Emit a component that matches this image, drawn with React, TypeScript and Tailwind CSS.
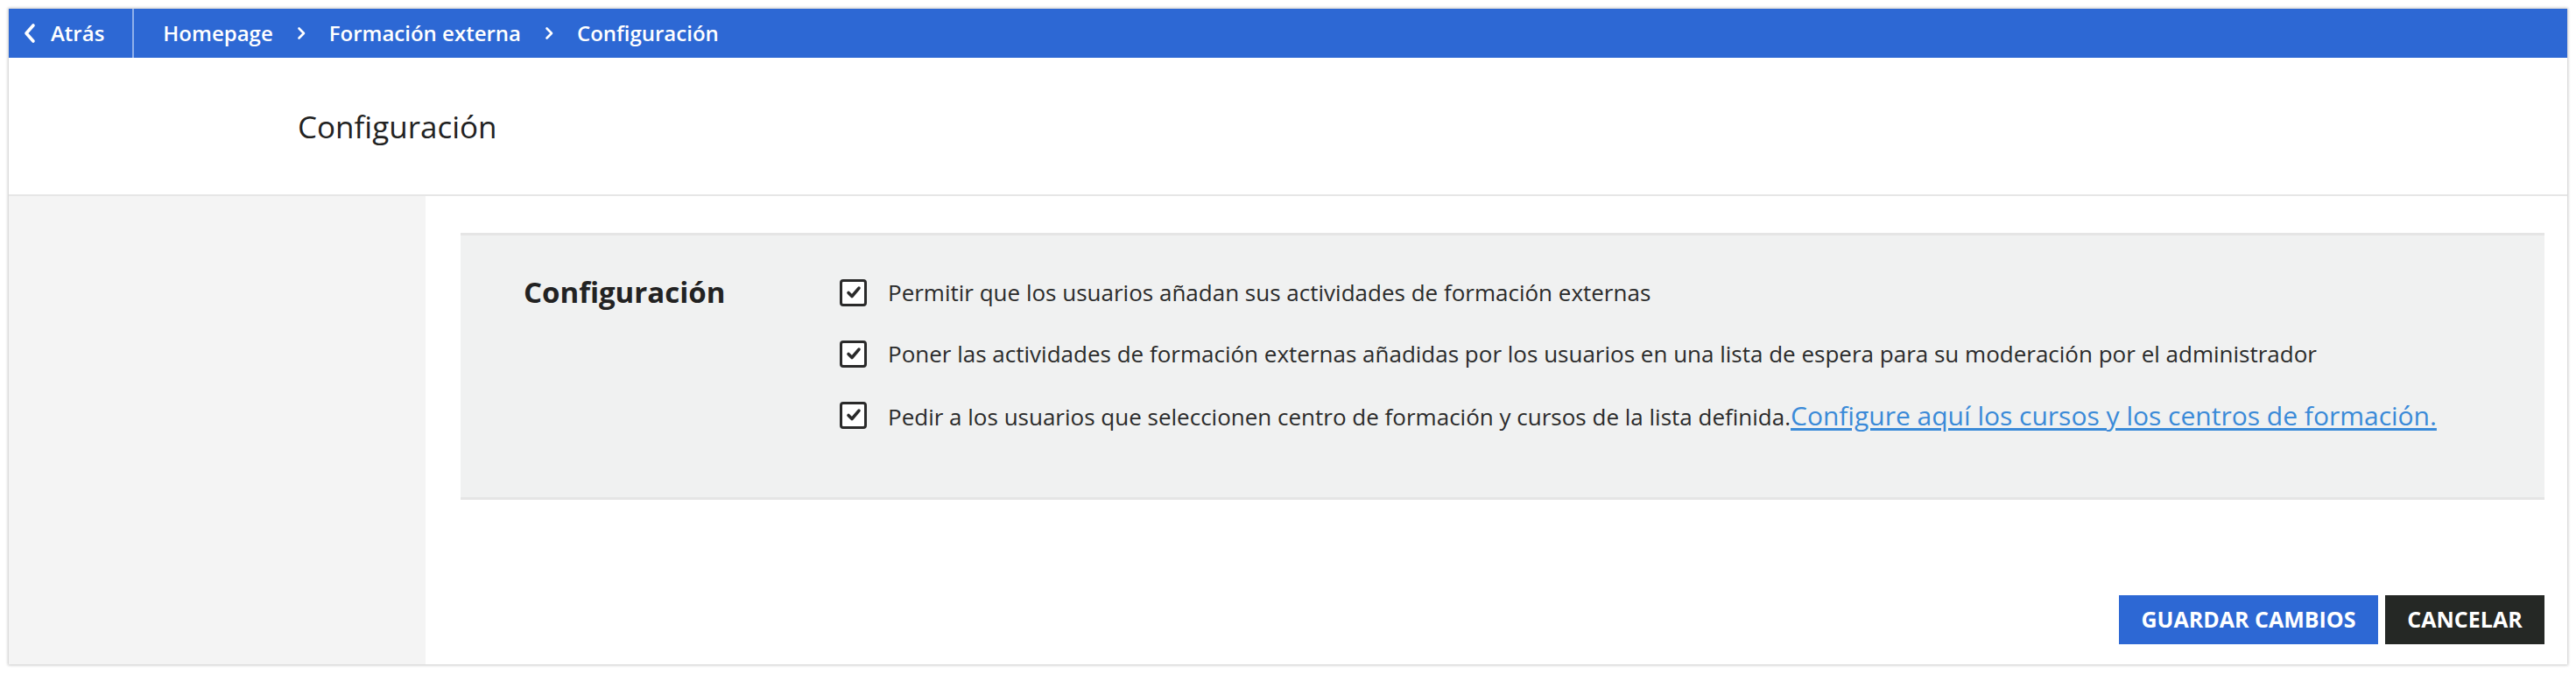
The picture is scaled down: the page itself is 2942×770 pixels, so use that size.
import React from "react";

function ChevronLeft() {
  return (
    <svg width="16" height="24" viewBox="0 0 16 24" fill="none" aria-hidden="true">
      <path d="M12 3 L4 12 L12 21" stroke="white" strokeWidth="3.6" strokeLinecap="round" strokeLinejoin="round" />
    </svg>
  );
}

function ChevronRight() {
  return (
    <svg width="12" height="16" viewBox="0 0 12 16" fill="none" aria-hidden="true">
      <path d="M3.5 2.5 L9 8 L3.5 13.5" stroke="white" strokeWidth="2.6" strokeLinecap="round" strokeLinejoin="round" />
    </svg>
  );
}

function CheckBox() {
  return (
    <span className="flex h-[31px] w-[31px] shrink-0 items-center justify-center rounded-[4px] border-[3.5px] border-[#2a2a2a] bg-white">
      <svg width="18" height="16" viewBox="0 0 18 16" fill="none" aria-hidden="true">
        <path d="M3 8.5 L7 12.5 L15 3.2" stroke="#2a2a2a" strokeWidth="3.6" strokeLinecap="round" strokeLinejoin="round" />
      </svg>
    </span>
  );
}

const crumbs = ["Homepage", "Formación externa", "Configuración"];

export default function App() {
  return (
    <div className="min-h-[770px] bg-white p-[10px] font-['Open_Sans',sans-serif] text-[#2b2b2b]">
      <div className="flex h-[749px] flex-col bg-white shadow-[0_0_3px_1px_rgba(0,0,0,0.22)]">
        {/* Breadcrumb bar */}
        <nav className="flex h-[56px] shrink-0 items-center bg-[#2d68d4] text-[24px] font-semibold text-white">
          <a className="flex h-full items-center gap-[16px] border-r-2 border-[#8fb0ea] pl-[16px] pr-[32px]">
            <ChevronLeft />
            <span>Atrás</span>
          </a>
          <div className="flex items-center gap-[26px] pl-[33px]">
            {crumbs.map((c, i) => (
              <React.Fragment key={c}>
                {i > 0 && <ChevronRight />}
                <span>{c}</span>
              </React.Fragment>
            ))}
          </div>
        </nav>

        {/* Page title */}
        <header className="flex h-[158px] shrink-0 items-center border-b-2 border-[#e6e6e6] pl-[330px]">
          <h1 className="pt-[2px] text-[35px] font-normal text-[#222]">Configuración</h1>
        </header>

        <div className="flex flex-1">
          <aside className="w-[476px] shrink-0 bg-[#f4f4f4]" />
          <main className="flex flex-1 flex-col pl-[40px] pr-[26px] pt-[42px]">
            <section className="flex border-y-[3px] border-[#e5e5e5] bg-[#f0f1f1] pb-[59px] pl-[72px] pt-[30px]">
              <div className="flex h-[70px] w-[361px] shrink-0 items-center">
                <h2 className="text-[33px] font-bold text-[#222]">Configuración</h2>
              </div>
              <div className="flex flex-col text-[26px]">
                <label className="flex h-[70px] items-center gap-[24px]">
                  <CheckBox />
                  <span>Permitir que los usuarios añadan sus actividades de formación externas</span>
                </label>
                <label className="flex h-[70px] items-center gap-[24px]">
                  <CheckBox />
                  <span>
                    Poner las actividades de formación externas añadidas por los usuarios en una lista de espera para su moderación por el administrador
                  </span>
                </label>
                <label className="flex h-[70px] items-center gap-[24px]">
                  <CheckBox />
                  <span>
                    Pedir a los usuarios que seleccionen centro de formación y cursos de la lista definida.
                    <a className="text-[30px] text-[#3a8ad8] underline underline-offset-[3px]">
                      Configure aquí los cursos y los centros de formación.
                    </a>
                  </span>
                </label>
              </div>
            </section>

            <div className="mt-[109px] flex justify-end gap-[8px]">
              <button className="flex h-[56px] w-[296px] items-center justify-center bg-[#2d68d4] text-[25px] font-bold uppercase text-white">
                Guardar cambios
              </button>
              <button className="flex h-[56px] w-[182px] items-center justify-center bg-[#252825] text-[25px] font-bold uppercase text-white">
                Cancelar
              </button>
            </div>
          </main>
        </div>
      </div>
    </div>
  );
}
